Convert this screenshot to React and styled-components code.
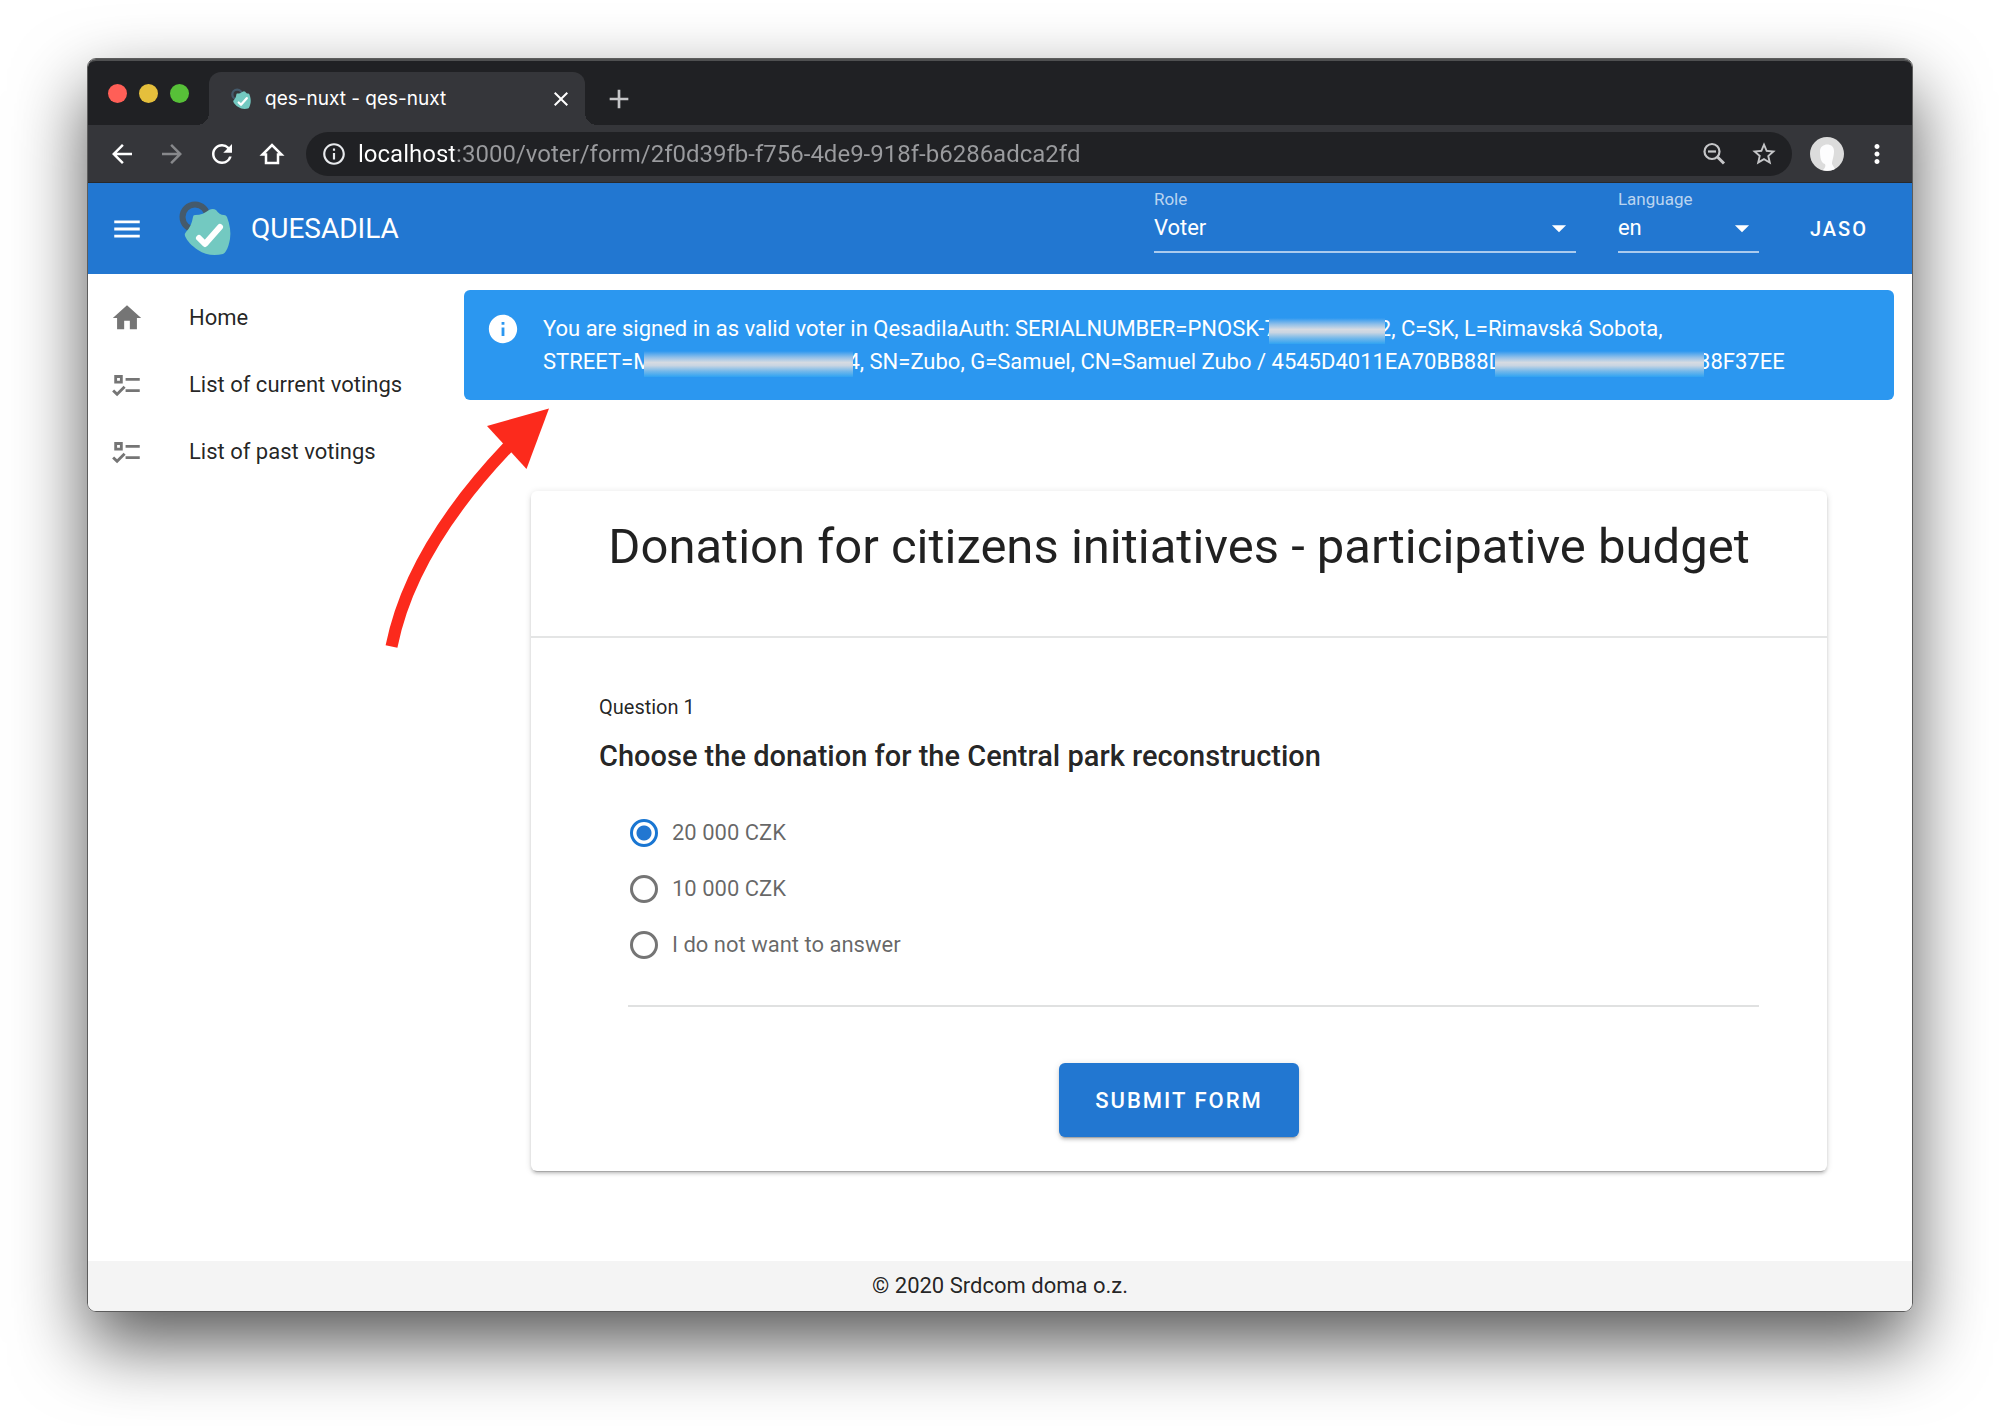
import React, { useState } from "react";
import styled, { createGlobalStyle } from "styled-components";
import {
  MdArrowBack,
  MdArrowForward,
  MdClose,
  MdAdd,
  MdRefresh,
  MdInfoOutline,
  MdStarBorder,
  MdMoreVert,
  MdMenu,
  MdHome,
  MdInfo,
  MdArrowDropDown,
} from "react-icons/md";

const GlobalStyle = createGlobalStyle`
  *, *::before, *::after { box-sizing: border-box; }
  body {
    margin: 0;
    background: #fff;
    color: rgba(0, 0, 0, 0.87);
    font-family: Roboto, "Liberation Sans", sans-serif;
    font-size: 22px;
  }
  button, input, select { font: inherit; color: inherit; }
  h1, h2, p { margin: 0; }
`;

const Desktop = styled.div`
  min-height: 100vh;
  padding: 58px 86px 114px 87px;
  display: flex;
  overflow: hidden;
`;

const Window = styled.div`
  position: relative;
  flex: 1;
  display: flex;
  flex-direction: column;
  border: 1px solid #5c5c5c;
  border-radius: 9px;
  box-shadow: 0 32px 72px rgba(0, 0, 0, 0.66);
`;

const TabStrip = styled.div`
  display: flex;
  align-items: flex-end;
  height: 66px;
  padding-left: 20px;
  background: #202124;
  border-top: 2px solid #4f5051;
  border-radius: 8px 8px 0 0;
`;

const Lights = styled.div`
  display: flex;
  gap: 12px;
  width: 101px;
  padding-bottom: 22px;
`;

const Light = styled.button`
  width: 19px;
  height: 19px;
  padding: 0;
  border: 0;
  border-radius: 50%;
  background: ${(p) => p.$color};
`;

const Tab = styled.div`
  position: relative;
  display: flex;
  align-items: center;
  gap: 14px;
  width: 376px;
  height: 53px;
  padding: 0 12px 0 22px;
  color: #fff;
  background: #35363a;
  border-radius: 12px 12px 0 0;
  font-family: Inter, Roboto, sans-serif;
  font-size: 19px;

  &::before,
  &::after {
    content: "";
    position: absolute;
    bottom: 0;
    width: 12px;
    height: 12px;
  }
  &::before {
    right: 100%;
    background: radial-gradient(circle at 0 0, transparent 12px, #35363a 12px);
  }
  &::after {
    left: 100%;
    background: radial-gradient(circle at 100% 0, transparent 12px, #35363a 12px);
  }
`;

const TabTitle = styled.span`
  flex: 1;
`;

const IconButton = styled.button`
  display: grid;
  place-items: center;
  padding: 0;
  border: 0;
  background: none;
  color: ${(p) => p.$color || "#fff"};
`;

const NewTab = styled(IconButton)`
  height: 53px;
  margin-left: 18px;
`;

const Toolbar = styled.div`
  display: flex;
  align-items: center;
  height: 58px;
  padding: 0 20px 0 19px;
  background: #35363a;
  border-bottom: 1px solid #28292b;
`;

const NavButtons = styled.div`
  display: flex;
  gap: 20px;
  margin-right: 19px;
`;

const AddressBar = styled.div`
  flex: 1;
  display: flex;
  align-items: center;
  height: 44px;
  padding: 0 14px 0 15px;
  gap: 22px;
  border-radius: 22px;
  background: #202124;
  color: #e8eaed;
`;

const Address = styled.label`
  flex: 1;
  display: flex;
  align-items: center;
  gap: 11px;
`;

const AddressInput = styled.input`
  flex: 1;
  height: 32px;
  padding: 0;
  border: 0;
  outline: 0;
  font-size: 24px;
  color: transparent;
  background: linear-gradient(to right, #fff 96px, #9a9b9e 96px);
  background-clip: text;
  -webkit-background-clip: text;
`;

const Avatar = styled(IconButton)`
  margin: 0 18px;
`;

const AppBar = styled.header`
  display: flex;
  align-items: center;
  height: 91px;
  padding: 0 22px;
  color: #fff;
  background: #2277d1;
`;

const Brand = styled.a`
  display: flex;
  align-items: center;
  gap: 20px;
  margin-left: 35px;
  margin-right: auto;
  color: inherit;
  text-decoration: none;
  font-size: 28px;
`;

const Fields = styled.div`
  display: flex;
  gap: 42px;
  margin-right: 29px;
`;

const Field = styled.div`
  position: relative;
  width: ${(p) => p.$width}px;
  padding-bottom: 16px;

  svg {
    position: absolute;
    right: 0;
    top: 22px;
    pointer-events: none;
  }
`;

const FieldLabel = styled.label`
  display: block;
  font-size: 17px;
  line-height: 20px;
  color: rgba(255, 255, 255, 0.7);
`;

const Select = styled.select`
  display: block;
  width: 100%;
  height: 44px;
  padding: 0 34px 4px 0;
  border: 0;
  border-bottom: 2px solid rgba(255, 255, 255, 0.62);
  border-radius: 0;
  appearance: none;
  background: none;

  option { color: #222; }
`;

const AccountButton = styled.button`
  height: 50px;
  padding: 0 22px;
  border: 0;
  background: none;
  font-size: 20px;
  font-weight: 500;
  letter-spacing: 2px;
`;

const Body = styled.div`
  flex: 1;
  display: flex;
  background: #fff;
`;

const Drawer = styled.nav`
  flex: 0 0 358px;
  padding-top: 10px;
`;

const NavLink = styled.a`
  display: flex;
  align-items: center;
  gap: 45px;
  height: 67px;
  padding-left: 22px;
  color: rgba(0, 0, 0, 0.87);
  text-decoration: none;

  svg { color: #757575; }
`;

const Main = styled.main`
  flex: 1;
  padding: 16px 18px;
`;

const Alert = styled.div`
  display: flex;
  align-items: flex-start;
  gap: 23px;
  padding: 22px;
  border-radius: 6px;
  background: #2b97f0;
  color: #fff;
  line-height: 33px;

  svg { flex: none; }
`;

const Unbroken = styled.span`
  white-space: nowrap;
`;

const Redacted = styled.span`
  position: relative;
  display: inline-block;
  width: ${(p) => p.$width}px;
  height: 26px;
  margin: 0 -6px 0 -8px;
  vertical-align: -8px;
  background: linear-gradient(#2b97f0, #8fbfe9 24%, #d6dbe2 44%, #c9d5e2 56%, #73b8ea 78%, #2fa3f2);
`;

const Card = styled.form`
  margin: 91px 67px 0;
  border-radius: 6px;
  background: #fff;
  box-shadow:
    0 4px 1px -3px rgba(0, 0, 0, 0.2),
    0 3px 3px rgba(0, 0, 0, 0.14),
    0 1px 7px rgba(0, 0, 0, 0.12);
`;

const CardTitle = styled.h1`
  padding: 28px 22px 61px;
  border-bottom: 2px solid #e4e5e5;
  font-size: 49px;
  font-weight: 400;
  line-height: 56px;
  text-align: center;
`;

const CardBody = styled.div`
  display: flex;
  flex-direction: column;
  padding: 55px 68px 34px;
`;

const Overline = styled.p`
  font-size: 20px;
  line-height: 28px;
`;

const Question = styled.h2`
  margin-top: 17px;
  font-size: 29px;
  font-weight: 500;
  line-height: 36px;
`;

const Options = styled.div`
  display: grid;
  gap: 28px;
  margin: 45px 0 46px 31px;
`;

const Option = styled.label`
  display: flex;
  align-items: center;
  gap: 14px;
  line-height: 28px;
  color: rgba(0, 0, 0, 0.6);
`;

const Radio = styled.input`
  appearance: none;
  width: 28px;
  height: 28px;
  margin: 0;
  border: 3px solid #757575;
  border-radius: 50%;

  &:checked {
    border-color: #1976d2;
    background: radial-gradient(circle, #2277d1 7px, transparent 8px);
  }
`;

const Rule = styled.hr`
  width: auto;
  margin: 0 0 56px 29px;
  border: 0;
  border-top: 2px solid #e0e1e1;
`;

const Submit = styled.button`
  align-self: center;
  height: 74px;
  padding: 0 36px;
  border: 0;
  border-radius: 6px;
  color: #fff;
  background: #2277d1;
  font-weight: 500;
  letter-spacing: 2px;
  box-shadow:
    0 4px 1px -3px rgba(0, 0, 0, 0.2),
    0 3px 3px rgba(0, 0, 0, 0.14),
    0 1px 7px rgba(0, 0, 0, 0.12);
`;

const Footer = styled.footer`
  height: 50px;
  line-height: 50px;
  text-align: center;
  background: #f4f4f4;
  border-radius: 0 0 8px 8px;
`;

const Pointer = styled.svg`
  position: absolute;
  left: 296px;
  top: 348px;
  pointer-events: none;
`;

function Logo({ width, height }) {
  return (
    <svg width={width} height={height} viewBox="0 0 52 56" aria-hidden="true">
      <circle cx="16" cy="16" r="12.500" fill="none" stroke="#455a6b" strokeWidth="6" />
      <path
        d="M14 16q0-2 2-2c6 0 10-2 14-5q4-2 7 0c2 3 5 5 8 5q2 0 3 2c3 8 4 15 3 22-1 5-2 9-4 12q-1 2-3 3c-9 2-18 1-25-4C13 45 8 40 6 35q-1-2 1-4c4-4 6-9 7-15z"
        fill="#73c9c1"
      />
      <path d="M20 37l6 6 15-17" fill="none" stroke="#fff" strokeWidth="6" strokeLinecap="round" strokeLinejoin="round" />
    </svg>
  );
}

function HouseOutline() {
  return (
    <svg width="30" height="30" viewBox="0 0 30 30" fill="none" stroke="currentColor" strokeWidth="2.500" aria-hidden="true">
      <path d="M9 24V15.500H5.500L15 6l9.500 9.500H21V24z" />
    </svg>
  );
}

function MagnifierMinus() {
  return (
    <svg width="28" height="28" viewBox="0 0 28 28" fill="none" stroke="currentColor" strokeWidth="2.200" aria-hidden="true">
      <circle cx="12" cy="11.500" r="7.500" />
      <path d="M17.500 17l6.500 6.500" strokeWidth="3" />
      <path d="M8 11.500h8" />
    </svg>
  );
}

function ListChecks() {
  return (
    <svg width="34" height="34" viewBox="0 0 24 24" fill="currentColor" aria-hidden="true">
      <path d="M3 5H9V11H3V5M5 7V9H7V7H5M11 7H21V9H11V7M11 15H21V17H11V15M5 20L1.5 16.5L2.91 15.09L5 17.17L9.59 12.59L11 14L5 20Z" />
    </svg>
  );
}

const choices = ["20 000 CZK", "10 000 CZK", "I do not want to answer"];

export default function App() {
  const [choice, setChoice] = useState(choices[0]);

  return (
    <>
      <GlobalStyle />
      <Desktop>
        <Window>
          <TabStrip>
            <Lights>
              <Light $color="#ff5f57" aria-label="Close window" />
              <Light $color="#e5bf3c" aria-label="Minimize window" />
              <Light $color="#57c038" aria-label="Zoom window" />
            </Lights>
            <Tab>
              <Logo width={20} height={22} />
              <TabTitle>qes-nuxt - qes-nuxt</TabTitle>
              <IconButton aria-label="Close tab">
                <MdClose size={24} />
              </IconButton>
            </Tab>
            <NewTab aria-label="New tab" $color="#c5c6c8">
              <MdAdd size={32} />
            </NewTab>
          </TabStrip>

          <Toolbar>
            <NavButtons>
              <IconButton aria-label="Back"><MdArrowBack size={30} /></IconButton>
              <IconButton aria-label="Forward" $color="#87888b"><MdArrowForward size={30} /></IconButton>
              <IconButton aria-label="Reload"><MdRefresh size={30} /></IconButton>
              <IconButton aria-label="Home page"><HouseOutline /></IconButton>
            </NavButtons>
            <AddressBar>
              <Address aria-label="Address">
                <MdInfoOutline size={26} />
                <AddressInput
                  type="text"
                  spellCheck={false}
                  defaultValue="localhost:3000/voter/form/2f0d39fb-f756-4de9-918f-b6286adca2fd"
                />
              </Address>
              <IconButton aria-label="Zoom out" $color="#c5c6c8"><MagnifierMinus /></IconButton>
              <IconButton aria-label="Bookmark" $color="#c5c6c8"><MdStarBorder size={28} /></IconButton>
            </AddressBar>
            <Avatar aria-label="Profile">
              <svg width="34" height="34" viewBox="0 0 34 34">
                <circle cx="17" cy="17" r="17" fill="#dcdcdc" />
                <path d="M10 14c0-8 14-9 14 0 0 6-2 9-2 13l3 5c-4 2-9 2-12 1 2-2 3-4 2-6-4-1-5-6-5-13z" fill="#fdfdfe" />
              </svg>
            </Avatar>
            <IconButton aria-label="Menu"><MdMoreVert size={30} /></IconButton>
          </Toolbar>

          <AppBar>
            <IconButton aria-label="Toggle navigation"><MdMenu size={34} /></IconButton>
            <Brand href="#">
              <Logo width={52} height={56} />
              QUESADILA
            </Brand>
            <Fields>
              <Field $width={422}>
                <FieldLabel htmlFor="role">Role</FieldLabel>
                <Select id="role" defaultValue="Voter">
                  <option>Voter</option>
                </Select>
                <MdArrowDropDown size={34} />
              </Field>
              <Field $width={141}>
                <FieldLabel htmlFor="language">Language</FieldLabel>
                <Select id="language" defaultValue="en">
                  <option>en</option>
                </Select>
                <MdArrowDropDown size={34} />
              </Field>
            </Fields>
            <AccountButton>JASO</AccountButton>
          </AppBar>

          <Body>
            <Drawer>
              <NavLink href="#"><MdHome size={34} />Home</NavLink>
              <NavLink href="#"><ListChecks />List of current votings</NavLink>
              <NavLink href="#"><ListChecks />List of past votings</NavLink>
            </Drawer>
            <Main>
              <Alert role="status">
                <MdInfo size={34} />
                <p>
                  You are signed in as valid voter in QesadilaAuth:{" "}
                  <Unbroken>SERIALNUMBER=PNOSK-7<Redacted $width={116} />2,</Unbroken> C=SK, L=Rimavská Sobota,{" "}
                  <Unbroken>STREET=M<Redacted $width={209} />4,</Unbroken> SN=Zubo, G=Samuel, CN=Samuel Zubo /{" "}
                  <Unbroken>4545D4011EA70BB88D<Redacted $width={209} />38F37EE</Unbroken>
                </p>
              </Alert>

              <Card onSubmit={(e) => e.preventDefault()}>
                <CardTitle>Donation for citizens initiatives - participative budget</CardTitle>
                <CardBody>
                  <Overline>Question 1</Overline>
                  <Question id="question">Choose the donation for the Central park reconstruction</Question>
                  <Options role="radiogroup" aria-labelledby="question">
                    {choices.map((c) => (
                      <Option key={c}>
                        <Radio type="radio" name="donation" checked={choice === c} onChange={() => setChoice(c)} />
                        {c}
                      </Option>
                    ))}
                  </Options>
                  <Rule />
                  <Submit type="submit">SUBMIT FORM</Submit>
                </CardBody>
              </Card>
            </Main>
          </Body>

          <Footer>© 2020 Srdcom doma o.z.</Footer>

          <Pointer width="168" height="244" viewBox="384 407 168 244" aria-hidden="true">
            <path d="M391.500 646.500Q411 549 508 447" fill="none" stroke="#fc2a1c" strokeWidth="12" />
            <path d="M549 408.500L487 426L526.500 469Z" fill="#fc2a1c" />
          </Pointer>
        </Window>
      </Desktop>
    </>
  );
}
